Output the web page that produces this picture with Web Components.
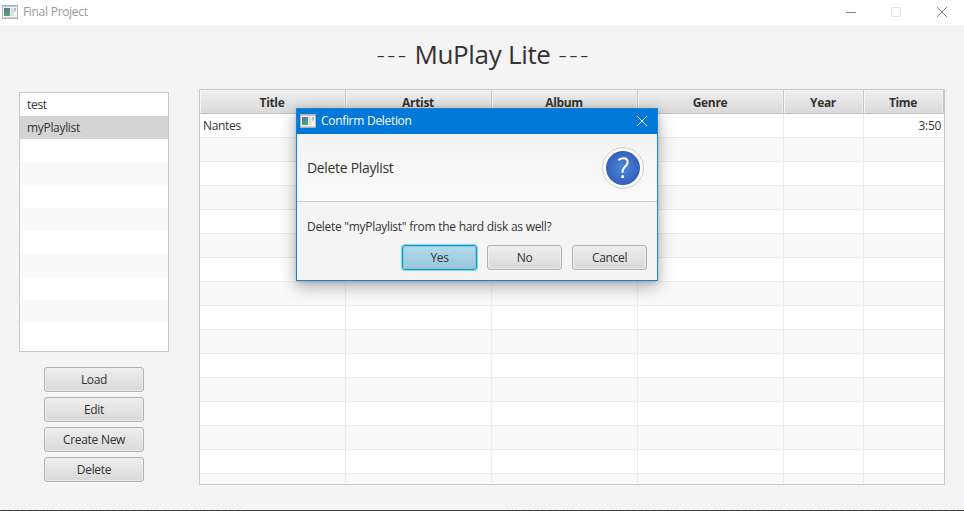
<!DOCTYPE html>
<html lang="en"><head><meta charset="utf-8"><title>Final Project</title>
<style>
html,body{margin:0;width:964px;height:511px;overflow:hidden;background:#f4f4f4}
body{font:12px "Open Sans","Noto Sans",sans-serif;letter-spacing:-.32px;word-spacing:.25px;color:#333}
</style></head><body>
<main-window></main-window>
<script>
const define=(name,html)=>customElements.define(name,class extends HTMLElement{
  connectedCallback(){
    if(this.shadowRoot)return;
    this.attachShadow({mode:'open'}).innerHTML=typeof html==='function'?html(this):html;
  }
});

define('app-icon',`<style>:host{display:block;width:16px;height:14px}svg{display:block}</style>
<svg width="16" height="14" viewBox="0 0 16 14"><defs><linearGradient id="g" x2="0.5" y2="1"><stop stop-color="#4b739f"/><stop offset="1" stop-color="#56a678"/></linearGradient></defs>
<rect x=".5" y=".5" width="15" height="13" fill="#f4f5f6" stroke="#b0b5ba"/><path d="M1 1h14v1H1z" fill="#c4c9ce"/><rect x="2" y="3" width="6" height="8" fill="url(#g)"/><path d="M8.500 3h3v8h-3z" fill="#dedede"/><path d="M12 3h2v2l-2 3z" fill="#9dcbb7"/><path d="M1 12h14v1H1z" fill="#cfd1d3"/></svg>`);

define('close-glyph',`<style>:host{display:block}svg{display:block}</style><svg width="12" height="12" viewBox="0 0 12 12" fill="none" stroke="currentColor"><path d="M1 1 11 11M11 1 1 11"/></svg>`);

define('push-button',`<style>
:host{display:flex;box-sizing:border-box;width:75px;height:25px;border:1px solid #b1b1b1;border-radius:3px;background:linear-gradient(#eee,#d9d9d9);box-shadow:inset 0 0 0 1px #f1f1f1b0,0 1px 0 #fafafa;align-items:center;justify-content:center;line-height:17px}
:host([primary]){border-color:#039ed3;background:linear-gradient(#b0dcec,#9bc5d9);box-shadow:0 0 0 1px #8bd2eb,inset 0 0 0 1px #8cc3d9}
</style><span><slot></slot></span>`);

define('title-bar',`<style>
:host{display:flex;box-sizing:border-box;height:25px;background:#fff;color:#999;align-items:flex-start;padding:5px 16px 0 2px}
.t{flex:1;margin-left:5px;line-height:14px}
.c{display:flex;color:#888}.c>*{display:block}
</style><app-icon></app-icon><span class="t"><slot></slot></span>
<div class="c"><svg width="84" height="14" viewBox="0 0 84 14" fill="none"><path d="M0 7.500H10" stroke="#888"/><rect x="45.500" y="2.500" width="9" height="9" stroke="#e4e4e4"/></svg><close-glyph style="margin:1px 0 0 6px"></close-glyph></div>`);

define('play-lists',`<style>
:host{display:flex;flex-direction:column;box-sizing:border-box;width:150px;height:260px;border:1px solid #c8c8c8;background:repeating-linear-gradient(#fff 0 23px,#f9f9f9 23px 46px);overflow:hidden}
</style><slot></slot>`);
define('list-row',`<style>
:host{display:block;height:23px;line-height:24px;padding-left:7px;color:#333}
:host([selected]){background:#d3d3d3}
</style><slot></slot>`);

const columns=['Title','Artist','Album','Genre','Year','Time'];
define('track-table',()=>`<style>
:host{display:block;box-sizing:border-box;width:746px;height:396px;border:1px solid #c8c8c8;background:#fff;overflow:hidden}
.r{display:grid;grid-template-columns:repeat(4,146px) 80px 80px;grid-template-rows:24px;height:24px}
.r>*{box-sizing:border-box;border-right:1px solid #ececec;border-bottom:1px solid #ececec;line-height:24px;padding:0 3px;color:#333}
.r>:last-child{border-right:0;text-align:right}
.r:nth-of-type(odd)>*{background:#f9f9f9}
.r.h>*{background:linear-gradient(#efefef,#d9d9d9);border-right:1px solid #c6c6c6;border-bottom-color:#c3c3c3;box-shadow:inset 1px 1px #f5f5f5,inset -1px 0 #eee;font-weight:700;text-align:center;line-height:25px;padding:0 3px 0 2px}
</style><div class="r h">${columns.map(c=>`<b>${c}</b>`).join('')}</div>
${Array.from({length:16},(_,i)=>`<div class="r">${columns.map((c,j)=>`<span>${i?'':j===0?'Nantes':j===5?'3:50':''}</span>`).join('')}</div>`).join('')}`);

define('question-badge',`<style>:host{display:block;width:42px;height:42px}svg{display:block}</style>
<svg width="42" height="42" viewBox="0 0 42 42"><defs><radialGradient id="q"><stop stop-color="#4c8ad9"/><stop offset="1" stop-color="#355fba"/></radialGradient></defs><circle cx="21" cy="21" r="20.400" fill="#fff" stroke="#ccc"/><circle cx="21" cy="21" r="17" fill="url(#q)"/><path d="M16.300 13.200Q18.500 11.300 21.500 11.300 25.600 11.300 25.700 15.200 25.700 17.700 22.800 20 20.600 21.800 20.600 25.800" fill="none" stroke="#fff" stroke-width="2"/><rect x="19.300" y="28.300" width="2.600" height="2.700" rx=".6" fill="#fff"/></svg>`);

define('confirm-dialog',`<style>
:host{display:block;position:absolute;left:296px;top:108px;box-sizing:border-box;width:362px;height:173px;border:1px solid #1883d7;background:#f4f4f4;box-shadow:0 5px 16px rgba(0,0,0,.32),0 1px 5px rgba(0,0,0,.12)}
.bar{display:flex;box-sizing:border-box;height:25px;background:#0078d7;color:#fff;padding:5px 9px 0 3px}
.bar span{flex:1;line-height:14px;margin-left:5px}
.head{display:flex;box-sizing:border-box;height:68px;background:linear-gradient(#f2f2f2,#fbfbfb);border-bottom:1px solid #c8c8c8;align-items:center;justify-content:space-between;padding:0 13px 0 10px;font-size:14px;letter-spacing:-.35px}
.msg{padding:16px 10px 0;line-height:17px}
.acts{display:flex;justify-content:flex-end;gap:10px;padding:10px 10px 0}
</style><div class="bar"><app-icon></app-icon><span>Confirm Deletion</span><close-glyph style="margin-top:1px"></close-glyph></div>
<div class="head"><span><slot name="head"></slot></span><question-badge></question-badge></div>
<div class="msg"><slot></slot></div>
<div class="acts"><push-button primary>Yes</push-button><push-button>No</push-button><push-button>Cancel</push-button></div>`);

define('main-window',`<style>
:host{display:flex;flex-direction:column;position:relative;width:964px;height:511px;background:#f4f4f4}
h1{display:flex;justify-content:center;align-items:center;gap:8px;height:64px;margin:0;font-weight:400;font-size:26px;letter-spacing:-.35px;line-height:58px;padding:0 0 6px 1px;box-sizing:border-box}
.d{font-weight:300;letter-spacing:2.300px;margin-right:-2px}
.content{display:flex;flex:1;padding-left:19px;gap:30px}
.side{padding-top:3px;width:150px}
.buttons{display:flex;flex-direction:column;align-items:center;gap:5px;margin-top:15px}
.buttons push-button{width:100px}
.edge{height:1px;background:linear-gradient(#3c383b,#3c383b) 246px 0/260px 1px no-repeat,repeating-linear-gradient(90deg,#55613c 0 1px,#3c383b 1px 6px,#475635 6px 8px,#3c383b 8px 13px)}
</style><title-bar>Final Project</title-bar>
<h1><span class="d">---</span><span>MuPlay Lite</span><span class="d">---</span></h1>
<div class="content"><div class="side"><play-lists><list-row>test</list-row><list-row selected>myPlaylist</list-row></play-lists>
<div class="buttons"><push-button>Load</push-button><push-button>Edit</push-button><push-button>Create New</push-button><push-button>Delete</push-button></div></div>
<track-table></track-table></div><div class="edge"></div>
<confirm-dialog><span slot="head">Delete Playlist</span>Delete "myPlaylist" from the hard disk as well?</confirm-dialog>`);
</script></body></html>
